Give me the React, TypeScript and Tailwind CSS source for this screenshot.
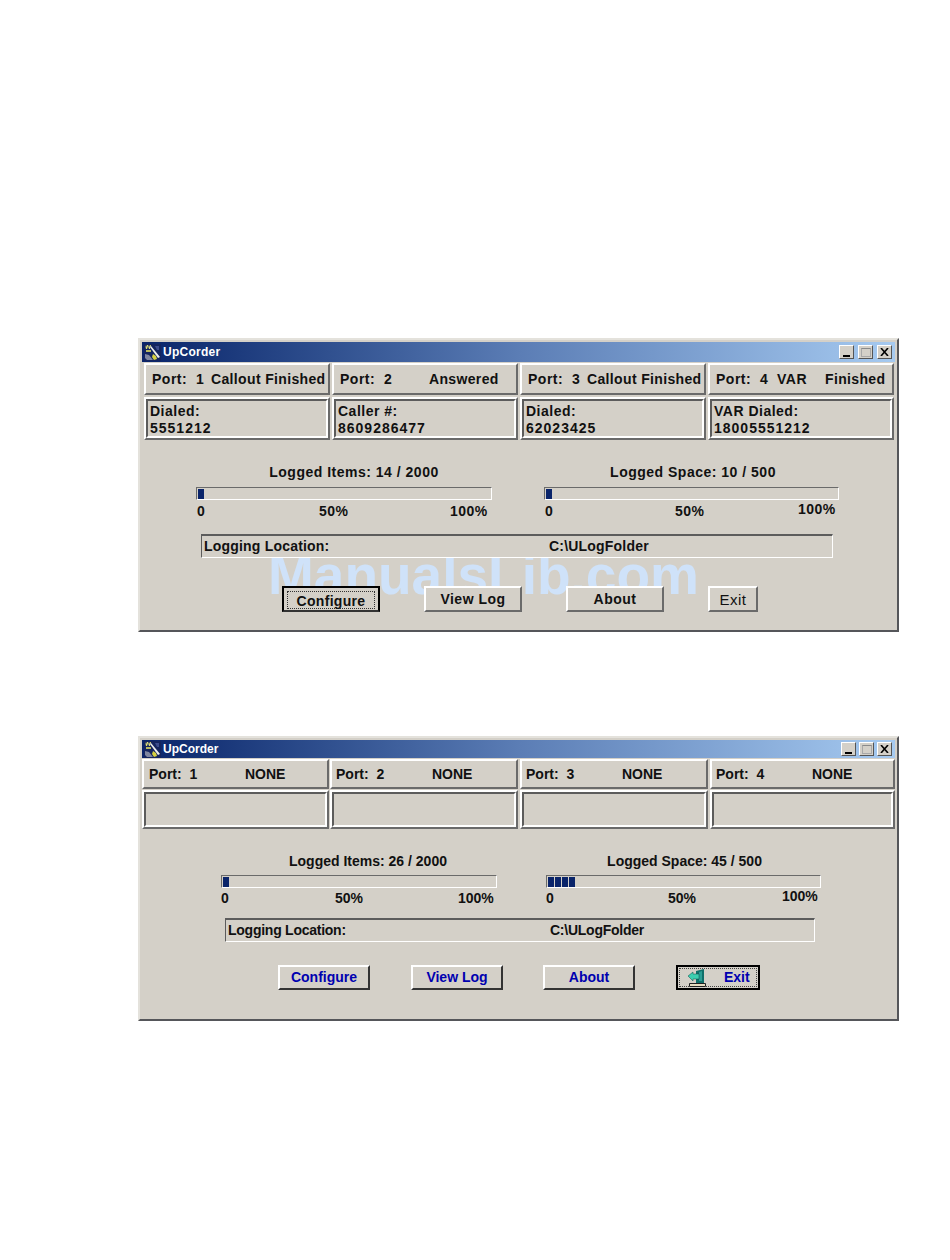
const RAISED = 'border-2 border-t-white border-l-white border-r-[#6a6a6a] border-b-[#6a6a6a]';
const SUNKEN = 'border-2 border-t-[#5c5c5c] border-l-[#5c5c5c] border-r-white border-b-white';
const WELL = 'border border-t-[#6a6a6a] border-l-[#6a6a6a] border-r-white border-b-white';

const AppIcon = () => (
   <svg width='17' height='17' viewBox='0 0 17 17' className='shrink-0'>
      <rect x='0' y='0' width='17' height='17' fill='#14245e' />
      <path d='M1 1l1 4h1l1-3 1 3h1l1-4-1 0-1 2-1-2-1 0-1 2-1-2z' fill='#dcdc78' />
      <path d='M2 6h5v2H2z' fill='#b8b860' />
      <path d='M6 3l1-1 9 11-2 1z' fill='#eeeeee' />
      <path d='M1 10l4 1 4 5H3l-2-2z' fill='#7f86a0' />
      <path d='M9 10l3 2 1 3-3 1-2-3z' fill='#d6d040' />
      <path d='M11 2h4v4h-2z' fill='#3c4c8c' />
   </svg>
);

const ExitIcon = () => (
   <svg width='19' height='18' viewBox='0 0 19 18' className='shrink-0'>
      <path d='M8 2l8-2v14H8z' fill='#0f6f6a' />
      <path d='M11 3l3-1v10h-3z' fill='#2a9d94' />
      <path d='M0 7l5-4v2h6v5H5v2z' fill='#3ccfb0' stroke='#0c4f4a' strokeWidth='0.500' />
      <path d='M1.500 14.500h16v3h-16z' fill='#e6dcc0' stroke='#222' strokeWidth='1' />
   </svg>
);

const CtrlButton = ({ children }: { children: React.ReactNode }) => (
   <div className='w-[15px] h-[14px] bg-[#d4d0c8] border border-t-white border-l-white border-r-[#555] border-b-[#555] flex items-center justify-center'>{children}</div>
);

const TitleBar = ({ heightClass, textClass, gapClass }: { heightClass: string, textClass: string, gapClass: string }) => (
   <div className={`${heightClass} flex items-center bg-gradient-to-r from-[#0a246a] via-[#5b7db5] to-[#a6caf0] pl-[2px] pr-[3px]`}>
      <AppIcon />
      <span className={`ml-[2px] text-white font-bold ${textClass}`}>UpCorder</span>
      <div className='ml-auto flex'>
         <CtrlButton><span className='w-[7px] h-[2px] bg-black mt-[7px]' /></CtrlButton>
         <div className={gapClass}>
            <CtrlButton><span className='w-[10px] h-[9px] border border-[#a8a8a8] border-t-[#8a8a8a]' /></CtrlButton>
         </div>
         <div className={gapClass}>
            <CtrlButton>
               <svg width='9' height='8' viewBox='0 0 9 8'><path d='M1 0l7 8M8 0L1 8' stroke='#000' strokeWidth='1.600' fill='none' /></svg>
            </CtrlButton>
         </div>
      </div>
   </div>
);

const Gauge = ({ wrapClass, labelClass, label, chunks, zero, half, full }: {
   wrapClass: string, labelClass: string, label: string, chunks: number, zero: string, half: string, full: string,
}) => (
   <div className={wrapClass}>
      <div className={`text-center h-[16px] leading-[16px] ${labelClass}`}>{label}</div>
      <div className={`h-[13px] mt-[var(--bar-gap)] ${WELL} flex items-center gap-[1px] pl-[1px]`}>
         {Array.from({ length: chunks }).map((_, i) => (
            <span key={i} className='w-[6px] h-[10px] bg-[#0a246a]' />
         ))}
      </div>
      <div className='mt-[var(--scale-gap)] h-[16px] leading-[16px] flex'>
         <span className={zero}>0</span>
         <span className={half}>50%</span>
         <span className={full}>100%</span>
      </div>
   </div>
);

const UpperWindow = () => {
   const ports = [
      { first: 'Port:  1', status: 'Callout Finished', width: 'w-[59px]', top: 'Dialed:', bottom: '5551212' },
      { first: 'Port:  2', status: 'Answered', width: 'w-[89px]', top: 'Caller #:', bottom: '8609286477' },
      { first: 'Port:  3', status: 'Callout Finished', width: 'w-[59px]', top: 'Dialed:', bottom: '62023425' },
      { first: 'Port:  4  VAR', status: 'Finished', width: 'w-[109px]', top: 'VAR Dialed:', bottom: '18005551212' },
   ];
   return (
      <div className='relative w-[761px] h-[294px] ml-[138px] bg-[#d4d0c8] border-2 border-t-[#e4e2dc] border-l-[#e4e2dc] border-r-[#55565a] border-b-[#55565a] p-[2px] tracking-[0.5px] text-[14px] font-bold text-[#111]'>
         <TitleBar heightClass='h-[20px]' textClass='text-[12px] tracking-[0.25px]' gapClass='ml-[4px]' />
         <div className='flex gap-[2px] pl-[2px] mt-[1px]'>
            {ports.map((p) => (
               <div key={p.first} className={`w-[186px] h-[32px] ${RAISED} pl-[6px] pt-[1px] flex items-center whitespace-pre`}>
                  <span className={p.width}>{p.first}</span>
                  <span className='whitespace-nowrap tracking-[0.35px]'>{p.status}</span>
               </div>
            ))}
         </div>
         <div className='flex gap-[2px] pl-[2px] mt-[2px]'>
            {ports.map((p) => (
               <div key={p.first} className={`w-[186px] h-[43px] ${RAISED} flex`}>
                  <div className={`flex-1 ${SUNKEN} leading-[17px] pt-[2px] pl-[2px]`}>
                     <div>{p.top}</div>
                     <div className='tracking-[1px]'>{p.bottom}</div>
                  </div>
               </div>
            ))}
         </div>
         <div className='relative z-10 flex mt-[24px] ml-[54px] gap-[52px] [--bar-gap:7px] [--scale-gap:3px]'>
            <Gauge wrapClass='w-[296px]' labelClass='pl-[20px]' label='Logged Items: 14 / 2000' chunks={1} zero='ml-[1px] w-[122px]' half='w-[131px]' full='' />
            <Gauge wrapClass='w-[295px]' labelClass='pl-[3px]' label='Logged Space: 10 / 500' chunks={1} zero='ml-[1px] w-[130px]' half='w-[123px]' full='-mt-[2px]' />
         </div>
         <div className='relative z-10 flex h-[24px] ml-[59px] w-[632px] mt-[15px] bg-[#d4d0c8] border border-t-[#5c5c5c] border-l-[#5c5c5c] border-t-2 border-r-white border-b-white items-center pl-[2px] tracking-[0.2px]'>
            <span className='w-[345px]'>Logging Location:</span>
            <span>C:\ULogFolder</span>
         </div>
         <div className='relative z-10 flex mt-[28px] ml-[140px] gap-[44px]'>
            <button className='w-[98px] h-[26px] pt-[1px] bg-[#d4d0c8] border-2 border-t-black border-l-black border-r-black border-b-[#333] flex items-center justify-center'>
               <span className='w-[88px] h-[18px] border border-dotted border-[#333] leading-[18px] tracking-[0.3px]'>Configure</span>
            </button>
            <button className={`w-[98px] h-[26px] pt-[1px] bg-[#d4d0c8] ${RAISED}`}>View Log</button>
            <button className={`w-[98px] h-[26px] pt-[1px] bg-[#d4d0c8] ${RAISED}`}>About</button>
            <button className={`w-[50px] h-[26px] pt-[1px] bg-[#d4d0c8] ${RAISED} font-normal text-[15px]`}>Exit</button>
         </div>
         <div className='absolute left-[128px] top-[205px] text-[55px] leading-[60px] font-bold tracking-normal text-[#cfe2f9] whitespace-nowrap'>ManualsLib.com</div>
      </div>
   );
};

const LowerWindow = () => {
   const ports = [
      { name: 'Port:  1', box: 'w-[187px]', pad: 'pl-[5px]' },
      { name: 'Port:  2', box: 'w-[188px] ml-[1px]', pad: 'pl-[4px]' },
      { name: 'Port:  3', box: 'w-[188px] ml-[2px]', pad: 'pl-[4px]' },
      { name: 'Port:  4', box: 'w-[185px] ml-[2px]', pad: 'pl-[4px]' },
   ];
   return (
      <div className='w-[761px] h-[285px] ml-[138px] mt-[104px] bg-[#d4d0c8] border-2 border-t-[#e4e2dc] border-l-[#e4e2dc] border-r-[#55565a] border-b-[#55565a] p-[2px] text-[14px] font-bold text-[#111]'>
         <TitleBar heightClass='h-[18px]' textClass='text-[12px]' gapClass='ml-[3px]' />
         <div className='flex mt-[1px]'>
            {ports.map((p) => (
               <div key={p.name} className={`${p.box} h-[30px] ${RAISED} ${p.pad} flex items-center whitespace-pre`}>
                  <span className='w-[96px]'>{p.name}</span>
                  <span>NONE</span>
               </div>
            ))}
         </div>
         <div className='flex mt-[1px]'>
            {ports.map((p) => (
               <div key={p.name} className={`${p.box} h-[39px] ${RAISED} flex`}>
                  <div className={`flex-1 ${SUNKEN}`} />
               </div>
            ))}
         </div>
         <div className='flex mt-[24px] ml-[79px] gap-[49px] [--bar-gap:6px] [--scale-gap:2px]'>
            <Gauge wrapClass='w-[276px]' labelClass='pl-[18px]' label='Logged Items: 26 / 2000' chunks={1} zero='w-[114px]' half='w-[123px]' full='' />
            <Gauge wrapClass='w-[275px]' labelClass='pl-[2px]' label='Logged Space: 45 / 500' chunks={4} zero='w-[122px]' half='w-[114px]' full='-mt-[2px]' />
         </div>
         <div className='flex h-[24px] ml-[83px] w-[590px] mt-[12px] border border-t-2 border-t-[#5c5c5c] border-l-[#5c5c5c] border-r-white border-b-white items-center pl-[2px] tracking-[-0.25px]'>
            <span className='w-[322px]'>Logging Location:</span>
            <span>C:\ULogFolder</span>
         </div>
         <div className='flex mt-[23px] ml-[136px] text-[#0000b0]'>
            <button className='w-[92px] h-[25px] bg-[#d4d0c8] border-2 border-t-white border-l-white border-r-[#333] border-b-[#333]'>Configure</button>
            <button className='ml-[41px] w-[92px] h-[25px] bg-[#d4d0c8] border-2 border-t-white border-l-white border-r-[#333] border-b-[#333]'>View Log</button>
            <button className='ml-[40px] w-[92px] h-[25px] bg-[#d4d0c8] border-2 border-t-white border-l-white border-r-[#333] border-b-[#333]'>About</button>
            <button className='ml-[41px] w-[84px] h-[25px] bg-[#d4d0c8] border-2 border-black flex items-center justify-center'>
               <span className='w-[78px] h-[19px] border border-dotted border-[#444] flex items-center pl-[8px]'>
                  <ExitIcon />
                  <span className='ml-[17px]'>Exit</span>
               </span>
            </button>
         </div>
      </div>
   );
};

const App = () => (
   <div className='w-[950px] h-[1260px] bg-white pt-[338px] font-["Liberation_Sans",Arial,sans-serif] overflow-hidden'>
      <UpperWindow />
      <LowerWindow />
   </div>
);

export default App;
